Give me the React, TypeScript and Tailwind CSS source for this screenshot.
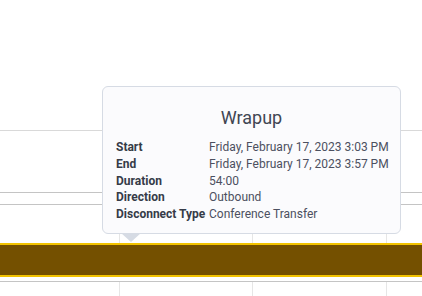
import React from 'react';

const rows: [string, string][] = [
  ['Start', 'Friday, February 17, 2023 3:03 PM'],
  ['End', 'Friday, February 17, 2023 3:57 PM'],
  ['Duration', '54:00'],
  ['Direction', 'Outbound'],
  ['Disconnect Type', 'Conference Transfer'],
];

// one band of the timeline grid, with the column dividers
const Band: React.FC<{ h: string }> = ({ h }) => (
  <div className={`flex ${h}`}>
    <div className="w-[120px] border-r border-[#e6e6e6]" />
    <div className="w-[133px] border-r border-[#e6e6e6]" />
    <div className="w-[134px] border-r border-[#e6e6e6]" />
    <div className="flex-1" />
  </div>
);

const App: React.FC = () => {
  return (
    <div
      className="relative w-[422px] h-[296px] overflow-hidden bg-white"
      style={{ fontFamily: 'Roboto, "Noto Sans", sans-serif' }}
    >
      {/* Timeline grid */}
      <div className="h-[130px]" />
      <div className="h-px bg-[#d9d9d9]" />
      <Band h="h-[61px]" />
      <div className="h-px bg-[#c4c4c4]" />
      <Band h="h-[11px]" />
      <div className="h-px bg-[#c4c4c4]" />
      <Band h="h-[38px]" />
      <div className="h-[34px] bg-[#745000] border-y-2 border-[#f3c300]" />
      <div className="h-[4px]" />
      <div className="h-px bg-[#c4c4c4]" />
      <Band h="h-[20px]" />

      {/* Tooltip */}
      <div className="absolute left-[102px] top-[86px] w-[299px] h-[148px] rounded-[6px] border border-[#d6dbe4] bg-[#fbfbfd] pl-[13px] pt-[19px]">
        <div className="text-center text-[18px] leading-[24px] text-[#414653] pr-[13px]">Wrapup</div>
        <div className="mt-[9px] flex flex-col">
          {rows.map(([label, value]) => (
            <div key={label} className="flex text-[12px] leading-[16.75px] whitespace-nowrap">
              <div className="w-[93px] shrink-0 font-bold text-[#363b48]">{label}</div>
              <div className="text-[#4c5060]">{value}</div>
            </div>
          ))}
        </div>
        <div className="absolute left-[18px] top-full w-0 h-0 border-x-[10px] border-x-transparent border-t-[9px] border-t-[#d6dbe4]" />
      </div>
    </div>
  );
};

export default App;
